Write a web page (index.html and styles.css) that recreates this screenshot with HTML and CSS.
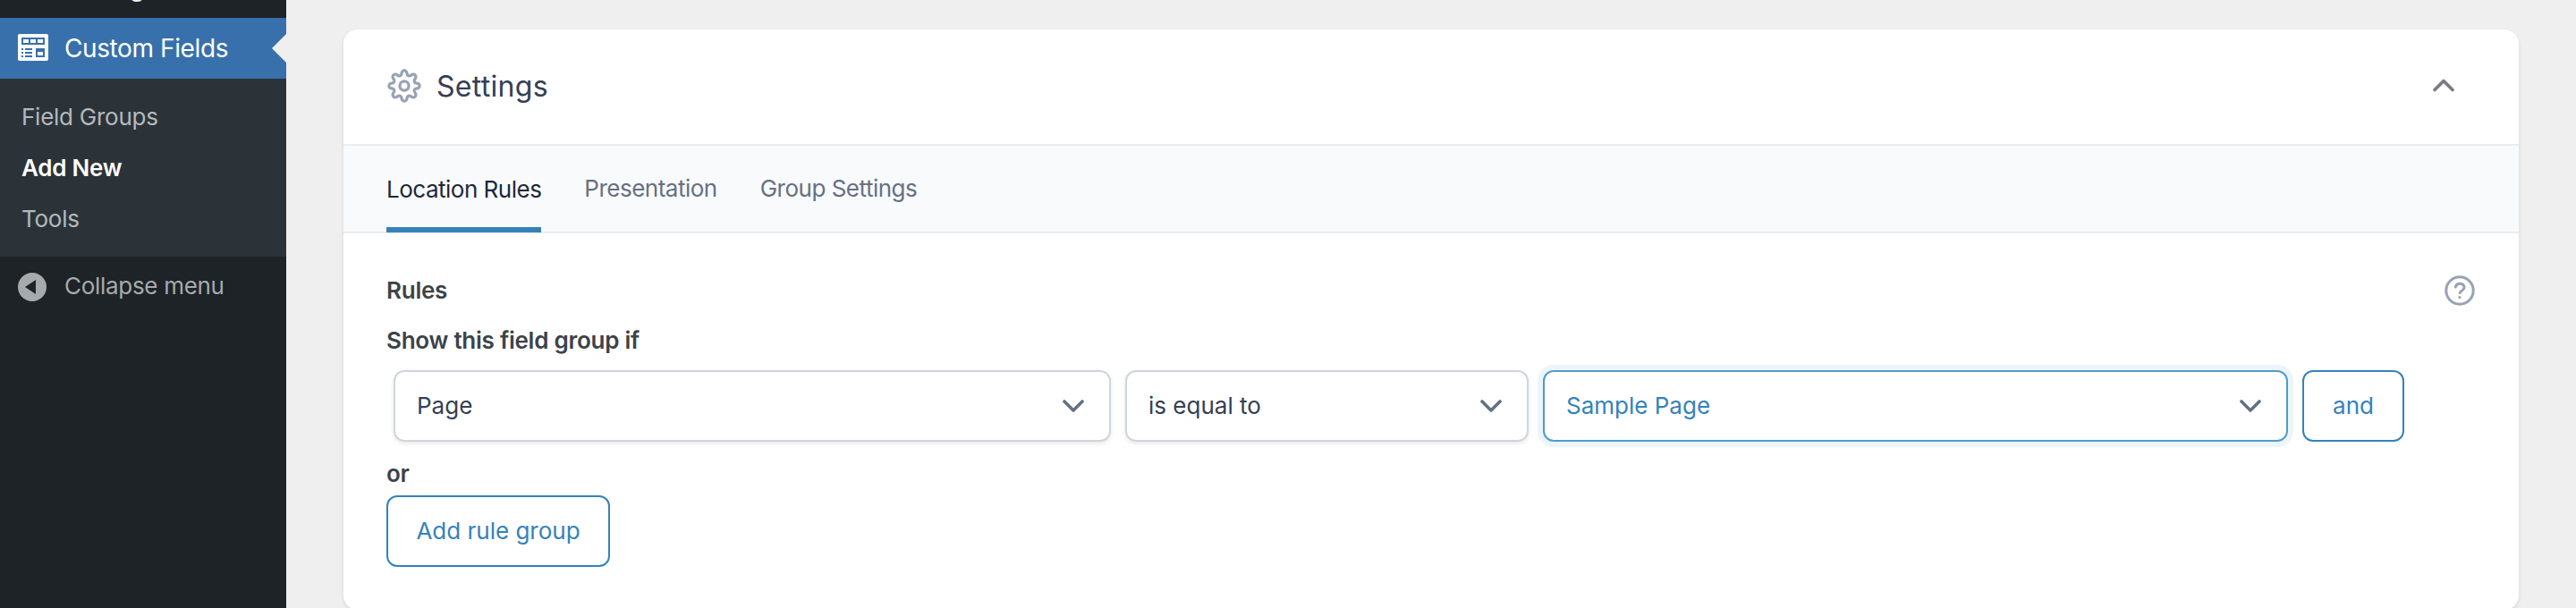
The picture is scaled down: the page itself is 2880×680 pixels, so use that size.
FILE: index.html
```html
<!DOCTYPE html>
<html lang="en">
<head>
<meta charset="utf-8">
<title>Edit Field Group</title>
<link rel="stylesheet" href="styles.css">
</head>
<body>
<div class="app">
  <nav class="sidebar">
    <a class="item previous"><span>Settings</span></a>
    <a class="item current">
      <svg class="menu-icon" width="34" height="30" viewBox="0 0 34 30"><rect width="34" height="30" rx="2" fill="#fff"/><g fill="#3870ab"><path d="M4 4h26v8H4z"/><path d="M4 16h2v2H4zM4 20h2v2H4zM4 24h2v2H4zM8 16h8v2H8zM8 20h8v2H8zM8 24h8v2H8zM20 16h10v10H20z"/></g><path fill="#fff" d="M6 6h6v4H6zM14 6h6v4h-6zM22 6h6v4h-6zM22 20h6v4h-6z"/></svg>
      <span>Custom Fields</span>
    </a>
    <div class="submenu">
      <a>Field Groups</a>
      <a class="active">Add New</a>
      <a>Tools</a>
    </div>
    <a class="item collapse">
      <svg class="menu-icon" width="32" height="32" viewBox="0 0 32 32"><circle cx="16" cy="16" r="16" fill="#a7aaad"/><path d="M20 8v16L8 16z" fill="#1d2327"/></svg>
      <span>Collapse menu</span>
    </a>
  </nav>
  <main class="content">
    <section class="card">
      <header class="card-head">
        <svg class="gear" width="40" height="40" viewBox="-0.500 -0.500 41 41" fill="none" stroke="#98a2b3" stroke-width="3.300" stroke-linejoin="round"><circle cx="20" cy="20" r="5.200"/><path d="M17 5.500 A3 3 0 0 1 23 5.500 C23.300 8.700 25.700 9.600 28.100 7.600 A3 3 0 0 1 32.400 11.900 C30.400 14.300 31.300 16.700 34.500 17 A3 3 0 0 1 34.500 23 C31.300 23.300 30.400 25.700 32.400 28.100 A3 3 0 0 1 28.100 32.400 C25.700 30.400 23.300 31.300 23 34.500 A3 3 0 0 1 17 34.500 C16.700 31.300 14.300 30.400 11.900 32.400 A3 3 0 0 1 7.600 28.100 C9.600 25.700 8.700 23.300 5.500 23 A3 3 0 0 1 5.500 17 C8.700 16.700 9.600 14.300 7.600 11.900 A3 3 0 0 1 11.900 7.600 C14.300 9.600 16.700 8.700 17 5.500Z"/></svg>
        <h2>Settings</h2>
        <svg class="toggle" width="24" height="16" viewBox="0 0 24 16" fill="none" stroke="#787c82" stroke-width="3.600" stroke-linecap="round" stroke-linejoin="round"><path d="M2 12.500 12 2.500 22 12.500"/></svg>
      </header>
      <div class="tabs">
        <a class="tab selected">Location Rules</a>
        <a class="tab">Presentation</a>
        <a class="tab">Group Settings</a>
      </div>
      <div class="body">
        <div class="label-row">
          <strong>Rules</strong>
          <svg width="34" height="34" viewBox="0 0 34 34" fill="none" stroke="#98a2b3" stroke-width="3" stroke-linecap="round"><circle cx="17" cy="17" r="15.200"/><path d="M12.300 13C13.500 7.500 22 8.300 22 13.800C22 17 17.200 17.200 17.200 19.500"/><circle cx="17" cy="24.500" r="1.600" fill="#98a2b3" stroke="none"/></svg>
        </div>
        <strong class="condition">Show this field group if</strong>
        <div class="rule">
          <div class="select param"><span>Page</span><svg class="chevron" viewBox="0 0 24 16"><path d="M2 3 12 13 22 3"/></svg></div>
          <div class="select operator"><span>is equal to</span><svg class="chevron" viewBox="0 0 24 16"><path d="M2 3 12 13 22 3"/></svg></div>
          <div class="select value focused"><span>Sample Page</span><svg class="chevron" viewBox="0 0 24 16"><path d="M2 3 12 13 22 3"/></svg></div>
          <a class="button and">and</a>
        </div>
        <strong class="or">or</strong>
        <a class="button add">Add rule group</a>
      </div>
    </section>
  </main>
</div>
</body>
</html>
```
FILE: styles.css
```css
* { box-sizing: border-box; }
body { margin: 0; font-family: Inter, "Liberation Sans", sans-serif; font-size: 26px; background: #f0f0f1; }
.app { display: flex; height: 680px; overflow: hidden; background: #efefef; }
.sidebar { width: 320px; flex: none; background: #1d2327; color: #fff; }
.item { display: flex; align-items: center; padding-left: 20px; }
.item span { white-space: nowrap; }
.previous { height: 68px; margin-top: -48px; padding-left: 72px; color: #f0f0f1; font-size: 28px; letter-spacing: -0.4px; }
.current { position: relative; height: 68px; gap: 18px; padding-bottom: 2px; background: #3870ab; font-size: 28px; letter-spacing: -0.4px; }
.current span { padding-top: 2px; }
.current::after { content: ""; position: absolute; right: 0; top: 18px; border: 16px solid transparent; border-left: 0; border-right-color: #efefef; }
.submenu { height: 199px; background: #2c3338; padding: 14px 24px; }
.submenu a { display: block; height: 57px; line-height: 57px; color: #b4b9be; font-size: 26px; letter-spacing: -0.25px; }
.submenu .active { color: #fff; font-weight: 600; }
.collapse { height: 68px; gap: 20px; color: #a7aaad; letter-spacing: -0.3px; }
.collapse span { padding-bottom: 4px; }
.content { flex: 1; padding: 33px 64px 0; }
.card { height: 649px; background: #fff; border-radius: 16px; overflow: hidden; box-shadow: 0 2px 4px rgba(16,24,40,.1); }
.card-head { height: 130px; display: flex; align-items: center; padding: 0 72px 2px 48px; border-bottom: 2px solid #eaecf0; }
h2 { margin: 0 auto 0 16px; font-size: 32px; font-weight: 400; letter-spacing: 0.3px; color: #344054; }
.tabs { height: 98px; display: flex; gap: 48px; padding: 0 48px; background: #f9fafb; border-bottom: 2px solid #eaecf0; }
.tab { height: 97px; line-height: 96px; font-size: 26px; letter-spacing: -0.5px; color: #667085; white-space: nowrap; }
.selected { line-height: 98px; color: #1d2939; border-bottom: 6px solid #3582ba; }
.body { padding: 47px 48px 0; }
strong { display: block; font-weight: 600; font-size: 26px; line-height: 34px; letter-spacing: -0.25px; color: #3c434a; }
.label-row { display: flex; justify-content: space-between; padding-right: 1px; }
.condition { margin-top: 22px; }
.rule { display: flex; gap: 16px; margin: 16px 0 0 8px; }
.select { height: 80px; border: 2px solid #d0d5dd; border-radius: 12px; padding: 0 28px 0 24px; display: flex; align-items: center; justify-content: space-between; color: #344054; box-shadow: 0 2px 4px rgba(16,24,40,.1); }
.select span { padding-bottom: 2px; }
.param { width: 802px; }
.operator { width: 451px; }
.value { width: 833px; }
.focused { color: #3582ba; border-color: #529bc8; box-shadow: 0 0 0 6px #ebf5fa; }
.chevron { width: 24px; height: 16px; fill: none; stroke: #667085; stroke-width: 3.6; stroke-linecap: round; stroke-linejoin: round; }
.button { display: flex; align-items: center; justify-content: center; height: 80px; padding-bottom: 2px; border: 2px solid #3582ba; border-radius: 12px; color: #3582ba; }
.and { width: 114px; }
.or { margin-top: 19px; }
.add { width: 250px; margin-top: 7px; }
```
